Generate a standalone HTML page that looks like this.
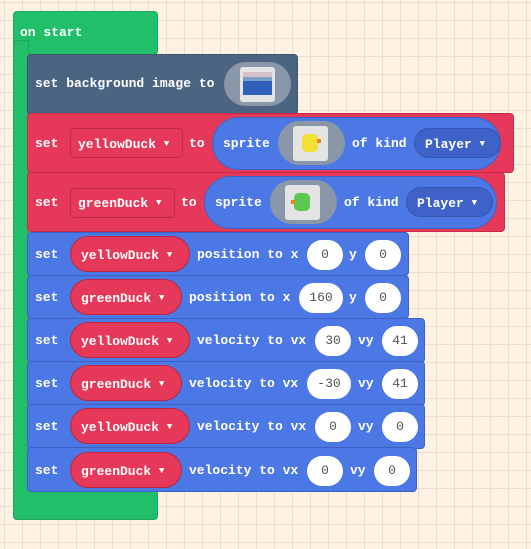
<!DOCTYPE html>
<html><head><style>
html,body{margin:0;padding:0}
body{width:531px;height:549px;overflow:hidden;position:relative;background-color:#fdf2e3;
background-image:linear-gradient(to right,#ecdecc 1px,transparent 1px),linear-gradient(to bottom,#ecdecc 1px,transparent 1px);
background-size:18px 18px;background-position:4px 2px;
font-family:"Liberation Mono",monospace;font-weight:bold;font-size:13px;color:#fff}
.a{position:absolute;box-sizing:border-box}
.t{position:absolute;white-space:pre;line-height:16px}
.t i{font-style:normal;font-size:9px;vertical-align:2px}
.g{background:#22bf6b;border:1px solid #1ca85c;border-radius:4px}
.d{background:#4b6482;border:1px solid #3e536c;border-radius:4px}
.r{background:#e6395a;border:1px solid #c52c49;border-radius:4px}
.b{background:#4c78e6;border:1px solid #3c63c4;border-radius:4px}
.rp{background:#e6395a;border:1px solid #b9283f;border-radius:18px}
.w{background:#fff;border-radius:16px;color:#555;font-weight:normal;text-align:center;line-height:32px}
.dd{background:#3f62c9;border:1px solid #3555b0;border-radius:16px}
.oval{background:#8a97a8;border-radius:24px}
.img{background:#e4e4e4;border-radius:3px}
</style></head><body>
<div class="a g" style="left:13px;top:11px;width:145px;height:44px"></div>
<div class="a g" style="left:13px;top:40px;width:16px;height:480px;border-radius:0 0 0 4px"></div>
<div class="a g" style="left:13px;top:490px;width:145px;height:30px;border-top:none"></div>
<div class="t" style="left:20px;top:25px">on start</div>

<div class="a d" style="left:27px;top:54px;width:271px;height:61px"></div>
<div class="t" style="left:35px;top:76px">set background image to</div>
<div class="a oval" style="left:224px;top:62px;width:67px;height:44px"></div>
<div class="a img" style="left:240px;top:67px;width:35px;height:35px"></div>
<div class="a" style="left:243px;top:72px;width:29px;height:6px;background:#d8c0c8"></div>
<div class="a" style="left:243px;top:77px;width:29px;height:4px;background:#7aa0c8"></div>
<div class="a" style="left:243px;top:81px;width:29px;height:14px;background:#2f5fb8"></div>

<div class="a r" style="left:27px;top:113px;width:487px;height:60px"></div>
<div class="t" style="left:35px;top:136px">set</div>
<div class="a" style="left:70px;top:128px;width:113px;height:30px;border:1px solid #c02a47;border-radius:4px"></div>
<div class="t" style="left:78px;top:136px">yellowDuck <i>▼</i></div>
<div class="t" style="left:189px;top:136px">to</div>
<div class="a" style="left:212px;top:117px;width:289px;height:53px;background:#4c78e6;border:1px solid #3c63c4;border-radius:27px"></div>
<div class="t" style="left:223px;top:136px">sprite</div>
<div class="a oval" style="left:278px;top:121px;width:67px;height:44px;border-radius:22px"></div>
<div class="a img" style="left:293px;top:126px;width:35px;height:35px"></div>
<div class="a" style="left:302px;top:134px;width:16px;height:18px;background:#f2e033;border-radius:5px"></div>
<div class="a" style="left:317px;top:139px;width:4px;height:4px;background:#f08020"></div>
<div class="t" style="left:352px;top:136px">of kind</div>
<div class="a dd" style="left:414px;top:128px;width:87px;height:30px"></div>
<div class="t" style="left:425px;top:136px">Player <i>▼</i></div>

<div class="a r" style="left:27px;top:172px;width:478px;height:60px"></div>
<div class="t" style="left:35px;top:195px">set</div>
<div class="a" style="left:70px;top:188px;width:105px;height:30px;border:1px solid #c02a47;border-radius:4px"></div>
<div class="t" style="left:78px;top:195px">greenDuck <i>▼</i></div>
<div class="t" style="left:181px;top:195px">to</div>
<div class="a" style="left:204px;top:176px;width:293px;height:53px;background:#4c78e6;border:1px solid #3c63c4;border-radius:27px"></div>
<div class="t" style="left:215px;top:195px">sprite</div>
<div class="a oval" style="left:270px;top:180px;width:67px;height:44px;border-radius:22px"></div>
<div class="a img" style="left:285px;top:185px;width:35px;height:35px"></div>
<div class="a" style="left:294px;top:193px;width:16px;height:18px;background:#5cc850;border-radius:5px"></div>
<div class="a" style="left:291px;top:200px;width:4px;height:4px;background:#f08020"></div>
<div class="t" style="left:344px;top:195px">of kind</div>
<div class="a dd" style="left:406px;top:187px;width:87px;height:30px"></div>
<div class="t" style="left:417px;top:195px">Player <i>▼</i></div>

<div class="a b" style="left:27px;top:232px;width:382px;height:44px"></div>
<div class="t" style="left:35px;top:247px">set</div>
<div class="a rp" style="left:70px;top:236px;width:120px;height:36px"></div>
<div class="t" style="left:81px;top:247px">yellowDuck <i>▼</i></div>
<div class="t" style="left:197px;top:247px">position to x</div>
<div class="a w" style="left:307px;top:240px;width:36px;height:30px;line-height:30px">0</div>
<div class="t" style="left:349px;top:247px">y</div>
<div class="a w" style="left:365px;top:240px;width:36px;height:30px;line-height:30px">0</div>

<div class="a b" style="left:27px;top:275px;width:382px;height:44px"></div>
<div class="t" style="left:35px;top:290px">set</div>
<div class="a rp" style="left:70px;top:279px;width:112px;height:36px"></div>
<div class="t" style="left:81px;top:290px">greenDuck <i>▼</i></div>
<div class="t" style="left:189px;top:290px">position to x</div>
<div class="a w" style="left:299px;top:283px;width:44px;height:30px;line-height:30px">160</div>
<div class="t" style="left:349px;top:290px">y</div>
<div class="a w" style="left:365px;top:283px;width:36px;height:30px;line-height:30px">0</div>

<div class="a b" style="left:27px;top:318px;width:398px;height:45px"></div>
<div class="t" style="left:35px;top:333px">set</div>
<div class="a rp" style="left:70px;top:322px;width:120px;height:36px"></div>
<div class="t" style="left:81px;top:333px">yellowDuck <i>▼</i></div>
<div class="t" style="left:197px;top:333px">velocity to vx</div>
<div class="a w" style="left:315px;top:326px;width:36px;height:30px;line-height:30px">30</div>
<div class="t" style="left:358px;top:333px">vy</div>
<div class="a w" style="left:382px;top:326px;width:36px;height:30px;line-height:30px">41</div>

<div class="a b" style="left:27px;top:361px;width:398px;height:45px"></div>
<div class="t" style="left:35px;top:376px">set</div>
<div class="a rp" style="left:70px;top:365px;width:112px;height:36px"></div>
<div class="t" style="left:81px;top:376px">greenDuck <i>▼</i></div>
<div class="t" style="left:189px;top:376px">velocity to vx</div>
<div class="a w" style="left:307px;top:369px;width:44px;height:30px;line-height:30px">-30</div>
<div class="t" style="left:358px;top:376px">vy</div>
<div class="a w" style="left:382px;top:369px;width:36px;height:30px;line-height:30px">41</div>

<div class="a b" style="left:27px;top:404px;width:398px;height:45px"></div>
<div class="t" style="left:35px;top:419px">set</div>
<div class="a rp" style="left:70px;top:408px;width:120px;height:36px"></div>
<div class="t" style="left:81px;top:419px">yellowDuck <i>▼</i></div>
<div class="t" style="left:197px;top:419px">velocity to vx</div>
<div class="a w" style="left:315px;top:412px;width:36px;height:30px;line-height:30px">0</div>
<div class="t" style="left:358px;top:419px">vy</div>
<div class="a w" style="left:382px;top:412px;width:36px;height:30px;line-height:30px">0</div>

<div class="a b" style="left:27px;top:447px;width:390px;height:45px"></div>
<div class="t" style="left:35px;top:463px">set</div>
<div class="a rp" style="left:70px;top:452px;width:112px;height:36px"></div>
<div class="t" style="left:81px;top:463px">greenDuck <i>▼</i></div>
<div class="t" style="left:189px;top:463px">velocity to vx</div>
<div class="a w" style="left:307px;top:456px;width:36px;height:30px;line-height:30px">0</div>
<div class="t" style="left:350px;top:463px">vy</div>
<div class="a w" style="left:374px;top:456px;width:36px;height:30px;line-height:30px">0</div>
</body></html>
